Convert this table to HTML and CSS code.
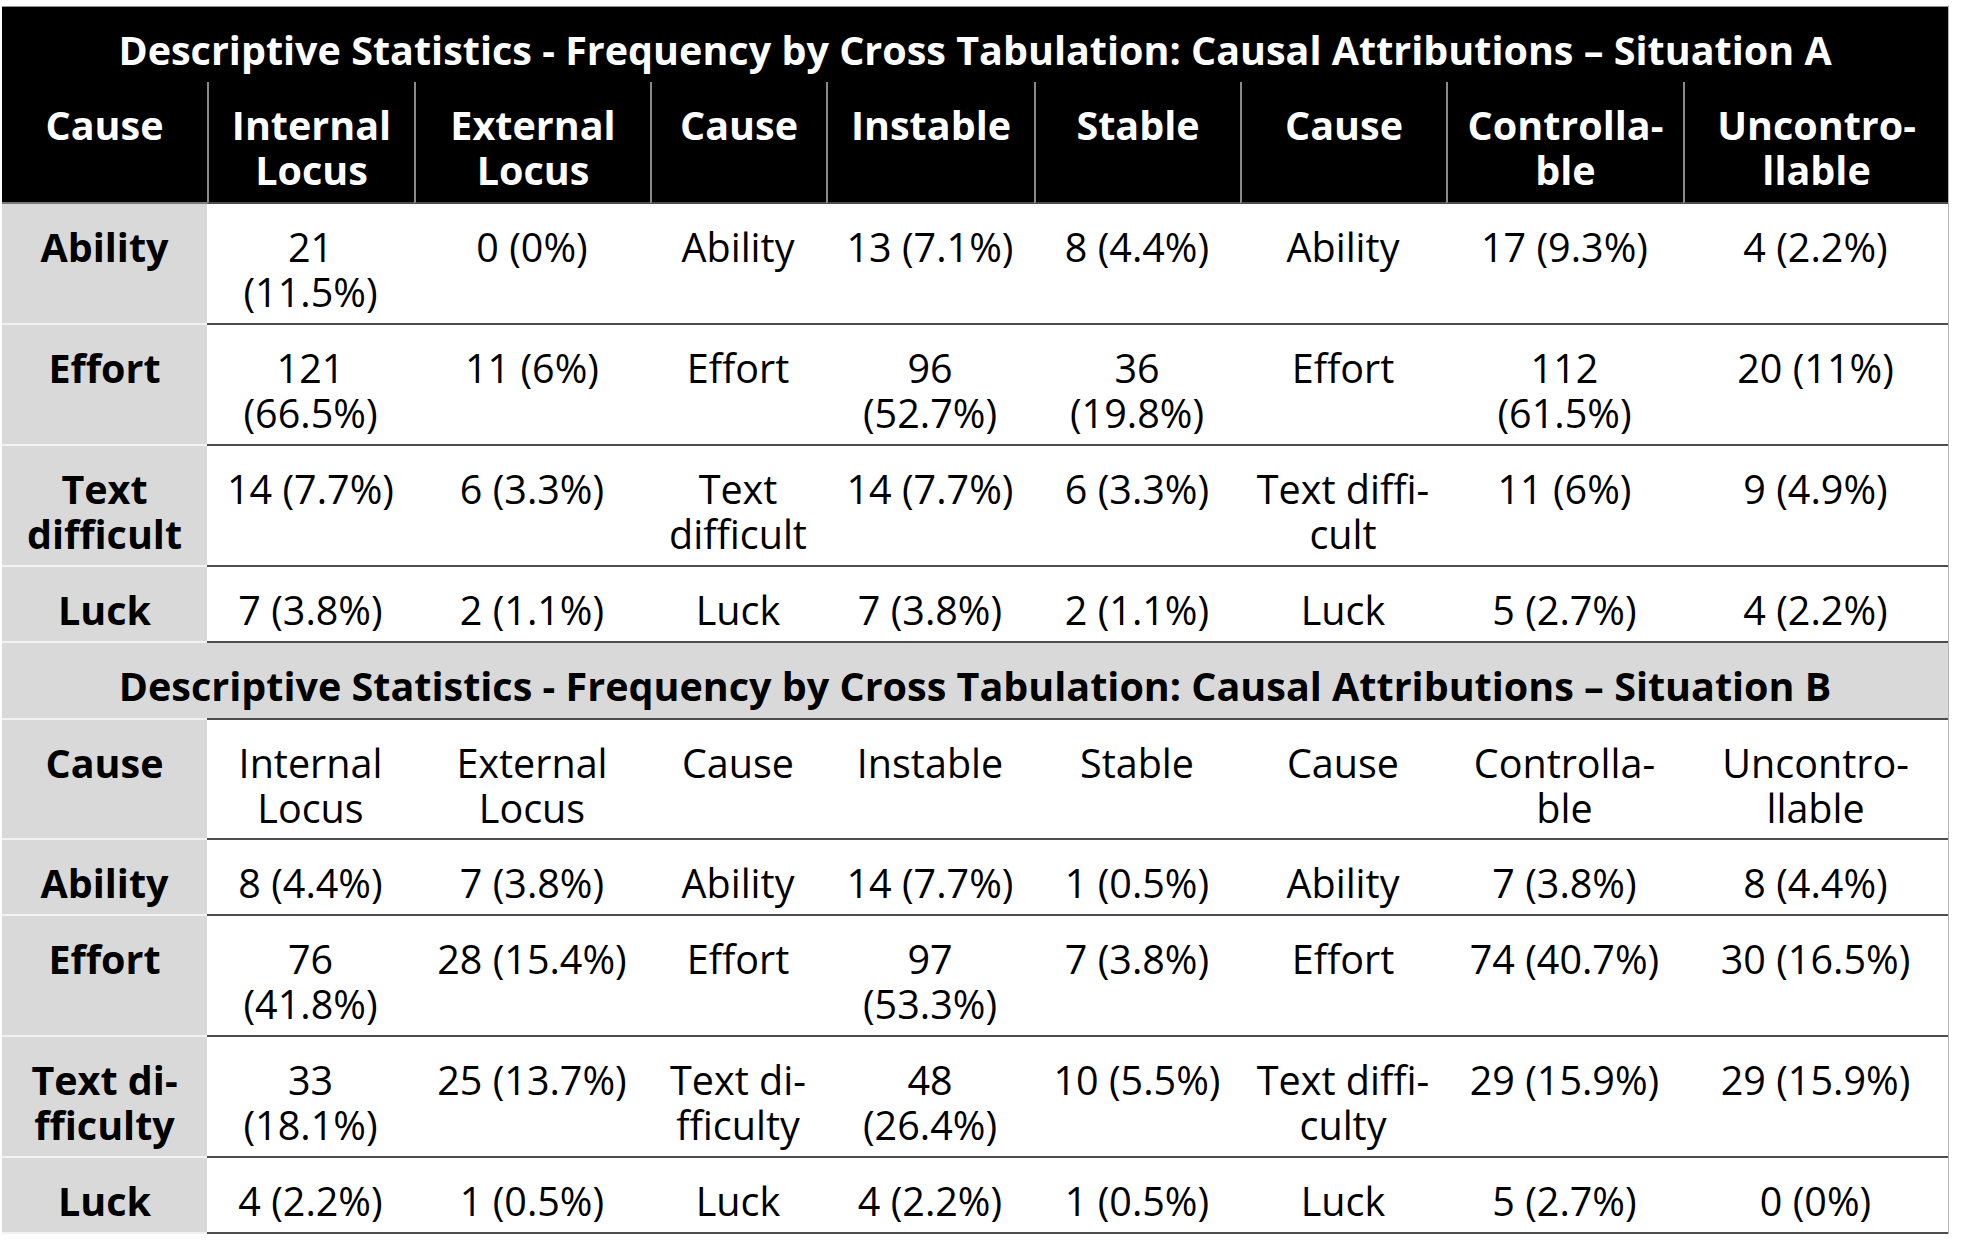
FILE: index.html
```html
<!DOCTYPE html>
<html lang="en">
<head>
<meta charset="utf-8">
<title>Descriptive Statistics - Causal Attributions</title>
<link rel="stylesheet" href="styles.css">
</head>
<body>
<table class="stats">
  <colgroup>
    <col class="c1"><col class="c2"><col class="c3"><col class="c4"><col class="c5"><col class="c6"><col class="c7"><col class="c8"><col class="c9">
  </colgroup>
  <tbody>
    <tr class="title-a">
      <th colspan="9">Descriptive Statistics - Frequency by Cross Tabulation: Causal Attributions – Situation A</th>
    </tr>
    <tr class="head-a">
      <th>Cause</th><th>Internal<br>Locus</th><th>External<br>Locus</th><th>Cause</th><th>Instable</th><th>Stable</th><th>Cause</th><th>Controlla-<br>ble</th><th>Uncontro-<br>llable</th>
    </tr>
    <tr>
      <th class="rh">Ability</th><td>21<br>(11.5%)</td><td>0 (0%)</td><td>Ability</td><td>13 (7.1%)</td><td>8 (4.4%)</td><td>Ability</td><td>17 (9.3%)</td><td>4 (2.2%)</td>
    </tr>
    <tr>
      <th class="rh">Effort</th><td>121<br>(66.5%)</td><td>11 (6%)</td><td>Effort</td><td>96<br>(52.7%)</td><td>36<br>(19.8%)</td><td>Effort</td><td>112<br>(61.5%)</td><td>20 (11%)</td>
    </tr>
    <tr>
      <th class="rh">Text<br>difficult</th><td>14 (7.7%)</td><td>6 (3.3%)</td><td>Text<br>difficult</td><td>14 (7.7%)</td><td>6 (3.3%)</td><td>Text diffi-<br>cult</td><td>11 (6%)</td><td>9 (4.9%)</td>
    </tr>
    <tr>
      <th class="rh">Luck</th><td>7 (3.8%)</td><td>2 (1.1%)</td><td>Luck</td><td>7 (3.8%)</td><td>2 (1.1%)</td><td>Luck</td><td>5 (2.7%)</td><td>4 (2.2%)</td>
    </tr>
    <tr class="title-b">
      <th colspan="9">Descriptive Statistics - Frequency by Cross Tabulation: Causal Attributions – Situation B</th>
    </tr>
    <tr class="head-b">
      <th class="rh">Cause</th><td>Internal<br>Locus</td><td>External<br>Locus</td><td>Cause</td><td>Instable</td><td>Stable</td><td>Cause</td><td>Controlla-<br>ble</td><td>Uncontro-<br>llable</td>
    </tr>
    <tr>
      <th class="rh">Ability</th><td>8 (4.4%)</td><td>7 (3.8%)</td><td>Ability</td><td>14 (7.7%)</td><td>1 (0.5%)</td><td>Ability</td><td>7 (3.8%)</td><td>8 (4.4%)</td>
    </tr>
    <tr>
      <th class="rh">Effort</th><td>76<br>(41.8%)</td><td>28 (15.4%)</td><td>Effort</td><td>97<br>(53.3%)</td><td>7 (3.8%)</td><td>Effort</td><td>74 (40.7%)</td><td>30 (16.5%)</td>
    </tr>
    <tr>
      <th class="rh">Text di-<br>fficulty</th><td>33<br>(18.1%)</td><td>25 (13.7%)</td><td>Text di-<br>fficulty</td><td>48<br>(26.4%)</td><td>10 (5.5%)</td><td>Text diffi-<br>culty</td><td>29 (15.9%)</td><td>29 (15.9%)</td>
    </tr>
    <tr>
      <th class="rh">Luck</th><td>4 (2.2%)</td><td>1 (0.5%)</td><td>Luck</td><td>4 (2.2%)</td><td>1 (0.5%)</td><td>Luck</td><td>5 (2.7%)</td><td>0 (0%)</td>
    </tr>
  </tbody>
</table>
</body>
</html>
```

FILE: styles.css
```css
html, body {
  margin: 0;
  padding: 0;
  background: #ffffff;
}

body {
  padding: 6px 0 0 2px;
  font-family: "Open Sans", "Noto Sans", sans-serif;
  color: #000000;
}

.stats {
  table-layout: fixed;
  width: 1947px;
  border-collapse: separate;
  border-spacing: 0;
  border-top: 1px solid #8f8f8f;
  border-right: 1px solid #b5b5b5;
  font-size: 39.5px;
  line-height: 45px;
}

.c1 { width: 205px; }
.c2 { width: 207px; }
.c3 { width: 236px; }
.c4 { width: 176px; }
.c5 { width: 208px; }
.c6 { width: 206px; }
.c7 { width: 206px; }
.c8 { width: 237px; }
.c9 { width: 265px; }

.stats th,
.stats td {
  padding: 21px 6px 8px;
  text-align: center;
  vertical-align: top;
  white-space: nowrap;
  border-bottom: 2px solid #4d4d4d;
  font-weight: 400;
}

.stats th.rh {
  background: #d9d9d9;
  font-weight: 700;
  border-bottom-color: #f2f2f2;
}

.title-a th {
  background: #000000;
  color: #ffffff;
  font-weight: 700;
  padding: 21px 6px 9px;
  border-bottom: none;
}

.head-a th {
  background: #000000;
  color: #ffffff;
  font-weight: 700;
  padding-bottom: 9px;
  border-left: 2px solid #8a8a8a;
  border-bottom-color: #4d4d4d;
}

.head-a th:first-child {
  border-left: none;
  border-bottom-color: #7a7a7a;
}

.title-b th {
  background: #d9d9d9;
  color: #000000;
  font-weight: 700;
  padding: 21px 6px 9px;
  border-bottom: none;
}

.head-b th,
.head-b td {
  border-top: 2px solid #4d4d4d;
  padding-bottom: 7px;
}

.head-b th.rh {
  border-top-color: #f2f2f2;
}
```
